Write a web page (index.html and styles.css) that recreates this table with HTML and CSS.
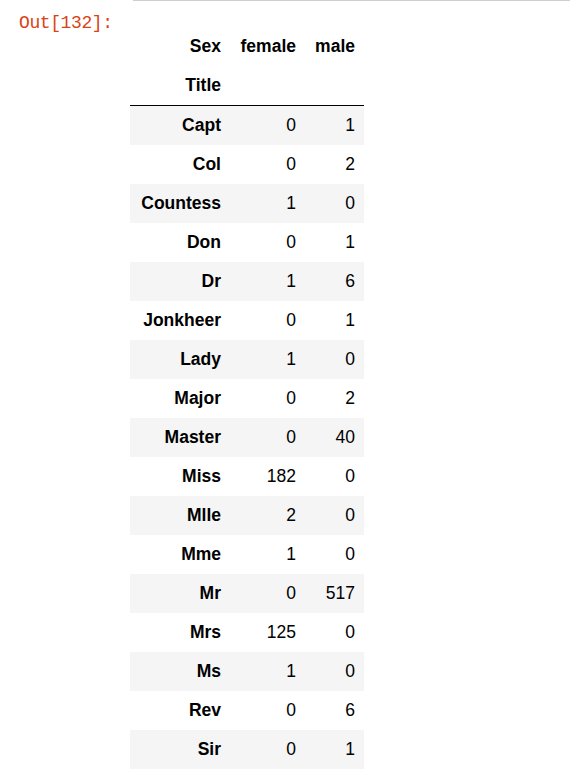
FILE: index.html
```html
<!DOCTYPE html>
<html>
<head>
<meta charset="utf-8">
<link rel="stylesheet" href="styles.css">
</head>
<body>
<div class="topline"></div>
<div class="output">
  <div class="prompt">Out[132]:</div>
  <table class="df">
    <colgroup><col class="c-idx"><col class="c-f"><col class="c-m"></colgroup>
    <thead>
      <tr><th>Sex</th><th>female</th><th>male</th></tr>
      <tr><th>Title</th><th></th><th></th></tr>
    </thead>
    <tbody>
      <tr><th>Capt</th><td>0</td><td>1</td></tr>
      <tr><th>Col</th><td>0</td><td>2</td></tr>
      <tr><th>Countess</th><td>1</td><td>0</td></tr>
      <tr><th>Don</th><td>0</td><td>1</td></tr>
      <tr><th>Dr</th><td>1</td><td>6</td></tr>
      <tr><th>Jonkheer</th><td>0</td><td>1</td></tr>
      <tr><th>Lady</th><td>1</td><td>0</td></tr>
      <tr><th>Major</th><td>0</td><td>2</td></tr>
      <tr><th>Master</th><td>0</td><td>40</td></tr>
      <tr><th>Miss</th><td>182</td><td>0</td></tr>
      <tr><th>Mlle</th><td>2</td><td>0</td></tr>
      <tr><th>Mme</th><td>1</td><td>0</td></tr>
      <tr><th>Mr</th><td>0</td><td>517</td></tr>
      <tr><th>Mrs</th><td>125</td><td>0</td></tr>
      <tr><th>Ms</th><td>1</td><td>0</td></tr>
      <tr><th>Rev</th><td>0</td><td>6</td></tr>
      <tr><th>Sir</th><td>0</td><td>1</td></tr>
    </tbody>
  </table>
</div>
</body>
</html>
```
FILE: styles.css
```css
html, body {
  margin: 0;
  padding: 0;
  background: #fff;
}
.topline {
  margin-left: 133px;
  height: 0;
  border-top: 1px solid #cfcfcf;
}
.output {
  display: flex;
  align-items: flex-start;
  padding-left: 19px;
}
.prompt {
  width: 111px;
  flex: none;
  font-family: "Liberation Mono", "DejaVu Sans Mono", monospace;
  font-size: 18px;
  letter-spacing: -0.4px;
  line-height: 22px;
  color: #d84315;
  margin-top: 11px;
}
.df {
  margin-top: 26px;
  border-collapse: collapse;
  border-spacing: 0;
  table-layout: fixed;
  width: 234px;
  font-family: "Liberation Sans", Arial, sans-serif;
  font-size: 17.5px;
  color: #000;
}
.c-idx { width: 100px; }
.c-f { width: 75px; }
.c-m { width: 59px; }
.df th, .df td {
  padding: 0 9px;
  height: 39px;
  line-height: 21px;
  text-align: right;
  vertical-align: middle;
  white-space: nowrap;
}
.df th { font-weight: bold; }
.df td { font-weight: normal; }
.df thead tr:last-child th {
  border-bottom: 1px solid #000;
}
.df tbody tr:nth-child(odd) {
  background: #f5f5f5;
}
```
